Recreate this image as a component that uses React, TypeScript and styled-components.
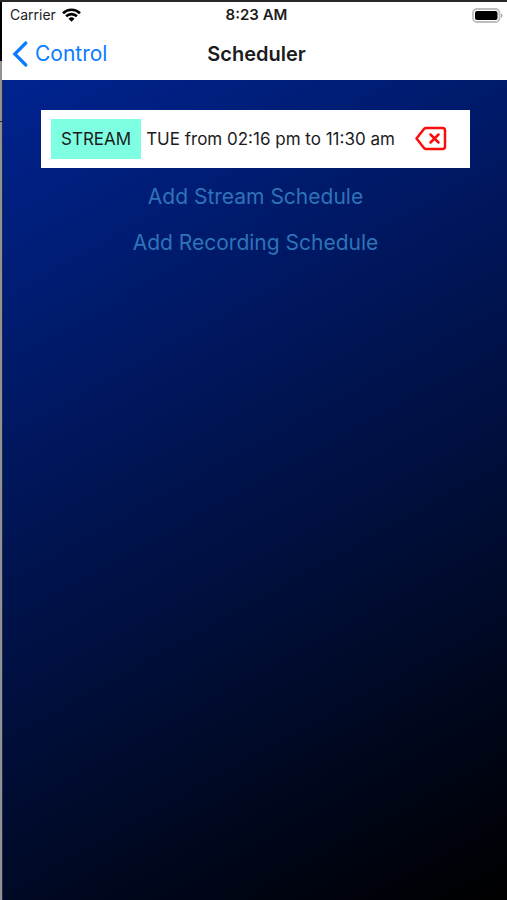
import React from "react";
import styled, { createGlobalStyle } from "styled-components";

const GlobalStyle = createGlobalStyle`
  *, *::before, *::after { box-sizing: border-box; }
  body {
    margin: 0;
    font-family: Inter, "Liberation Sans", sans-serif;
    color: #1c1c1e;
    background: #000;
  }
`;

const Desktop = styled.div`
  display: flex;
  min-height: 100vh;
  border-top: 2px solid #2b2728;
`;

const BackdropEdge = styled.div`
  flex: 0 0 2px;
  background: linear-gradient(#000 59px, #929292 59px, #929292 119px, #222 119px, #222 120px, #929292 120px);
`;

const Phone = styled.div`
  flex: 1;
  min-width: 0;
  display: flex;
  flex-direction: column;
  border-left: 1px solid #1a2a50;
`;

const Header = styled.header`
  background: #fff;
  margin-left: -1px;
`;

const Bar = styled.div`
  display: grid;
  grid-template-columns: 1fr auto 1fr;
  align-items: center;
  padding: 0 4px 0 8px;
`;

const StatusBar = styled(Bar)`
  height: 26px;
  font-size: 14px;
  line-height: 18px;
`;

const NavBar = styled(Bar)`
  height: 52px;
`;

const Carrier = styled.span`
  display: flex;
  align-items: center;
  gap: 6px;
`;

const Clock = styled.time`
  font-size: 15px;
  font-weight: 600;
`;

const BatteryIcon = styled.svg`
  justify-self: end;
`;

const BackLink = styled.a`
  display: flex;
  align-items: center;
  gap: 5px;
  color: #0a7cff;
  font-size: 21px;
  line-height: 28px;
  text-decoration: none;
`;

const Title = styled.h1`
  margin: 0;
  font-size: 20px;
  line-height: 28px;
  font-weight: 600;
`;

const Content = styled.main`
  flex: 1;
  display: flex;
  flex-direction: column;
  align-items: center;
  padding: 30px 37px 30px 38px;
  background: linear-gradient(151deg, #002390, #000);
`;

const ScheduleList = styled.ul`
  align-self: stretch;
  margin: 0 0 6px;
  padding: 0;
  list-style: none;
`;

const ScheduleRow = styled.li`
  display: flex;
  align-items: center;
  padding: 9px 21px 9px 10px;
  background: #fff;
  font-size: 17px;
  line-height: 24px;
`;

const Badge = styled.span`
  padding: 8px 10px;
  background: #7fffe1;
`;

const Period = styled.span`
  flex: 1;
  padding-left: 5px;
`;

const DeleteButton = styled.button`
  display: flex;
  padding: 0 2px;
  border: 0;
  background: none;
  color: #fb0d0d;
  cursor: pointer;
`;

const AddButton = styled.button`
  height: 46px;
  padding: 0 8px;
  border: 0;
  background: none;
  color: #2f73b8;
  font: inherit;
  font-size: 21px;
  line-height: 28px;
  cursor: pointer;
`;

const schedules = [{ kind: "STREAM", period: "TUE from 02:16 pm to 11:30 am" }];

export default function App() {
  return (
    <>
      <GlobalStyle />
      <Desktop>
        <BackdropEdge />
        <Phone>
          <Header>
            <StatusBar>
              <Carrier>
                Carrier
                <svg width="19" height="14" viewBox="0 0 19 14" fill="none" stroke="#000" strokeWidth="2.6" role="img" aria-label="Wi-Fi">
                  <path d="M1 5.2a12.2 12.2 0 0 1 17 0" />
                  <path d="M4.1 8.3a7.8 7.8 0 0 1 10.8 0" />
                  <path d="M9.5 13.8 6.5 10.8a4.3 4.3 0 0 1 6 0z" fill="#000" stroke="none" />
                </svg>
              </Carrier>
              <Clock>8:23 AM</Clock>
              <BatteryIcon width="31" height="15" viewBox="0 0 31 15" role="img" aria-label="Battery full">
                <rect x="1" y="1" width="26.5" height="13" rx="4" fill="#fff" stroke="#bdbdbd" strokeWidth="1.8" />
                <rect x="3" y="3" width="22.5" height="9" rx="2" fill="#000" />
                <path d="M29 5.2c2 .8 2 3.8 0 4.6z" fill="#a8a8a8" />
              </BatteryIcon>
            </StatusBar>
            <NavBar>
              <BackLink href="#control">
                <svg width="20" height="28" viewBox="0 0 20 28" fill="none" stroke="currentColor" strokeWidth="3.2" strokeLinecap="round" strokeLinejoin="miter" aria-hidden="true">
                  <path d="M15.8 3 4.8 14l11 11" />
                </svg>
                Control
              </BackLink>
              <Title>Scheduler</Title>
            </NavBar>
          </Header>
          <Content>
            <ScheduleList>
              {schedules.map((s) => (
                <ScheduleRow key={s.period}>
                  <Badge>{s.kind}</Badge>
                  <Period>{s.period}</Period>
                  <DeleteButton type="button" aria-label="Delete schedule">
                    <svg width="32" height="26" viewBox="0 0 32 26" fill="none" stroke="currentColor" strokeWidth="2.5" strokeLinecap="round" strokeLinejoin="round">
                      <path d="M11 2H27.5a2.5 2.5 0 0 1 2.5 2.5v16a2.5 2.5 0 0 1-2.5 2.5H11a2.5 2.5 0 0 1-1.8-.8L1.5 12.5 9.2 2.8A2.5 2.5 0 0 1 11 2z" />
                      <path d="m15.5 8.5 8 8M23.5 8.5l-8 8" />
                    </svg>
                  </DeleteButton>
                </ScheduleRow>
              ))}
            </ScheduleList>
            <AddButton type="button">Add Stream Schedule</AddButton>
            <AddButton type="button">Add Recording Schedule</AddButton>
          </Content>
        </Phone>
      </Desktop>
    </>
  );
}
